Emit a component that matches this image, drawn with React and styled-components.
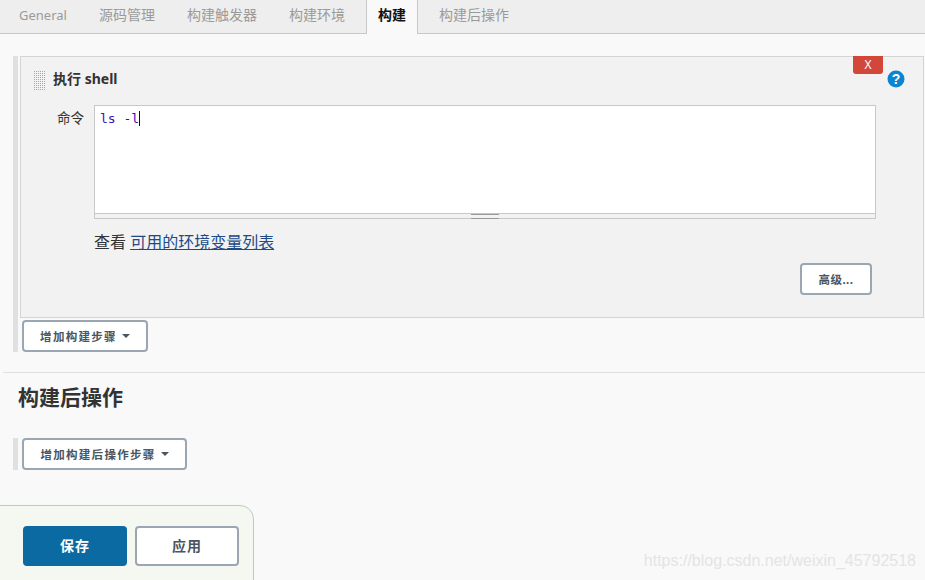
import React from "react";
import styled, { createGlobalStyle } from "styled-components";

const Global = createGlobalStyle`
  html, body { margin: 0; padding: 0; background: #f9f9f9; }
  body { width: 925px; height: 580px; overflow: hidden; font-family: "Noto Sans", "Noto Sans CJK SC", sans-serif; color: #333; }
  * { box-sizing: border-box; }
`;

const Page = styled.div`
  position: relative;
  width: 925px;
  height: 580px;
  overflow: hidden;
  display: flex;
  flex-direction: column;
`;

const TabBar = styled.div`
  display: flex;
  height: 34px;
  padding-left: 3px;
  background: #eeeeee;
  border-bottom: 1px solid #c8c8c8;
  flex: none;
`;

const Tab = styled.div`
  padding: 0 16px;
  height: 33px;
  line-height: 30px;
  font-size: ${(p) => p.$size || 14}px;
  color: #9a9a9a;
  white-space: nowrap;
`;

const ActiveTab = styled.div`
  margin: 0 5px 0 5px;
  padding: 0 11px;
  height: 34px;
  line-height: 30px;
  font-size: 14px;
  font-weight: 700;
  color: #111;
  background: #f9f9f9;
  border-left: 1px solid #c8c8c8;
  border-right: 1px solid #c8c8c8;
  white-space: nowrap;
`;

const Section = styled.div`
  display: flex;
  flex-direction: column;
  align-items: flex-start;
  margin: ${(p) => p.$margin};
  padding-left: 2px;
  border-left: 5px solid #e0e0e0;
`;

const Panel = styled.div`
  position: relative;
  width: 904px;
  height: 262px;
  padding: 0 0 0 12px;
  background: #f2f2f2;
  border: 1px solid #d4d4d4;
  margin-bottom: 2px;
`;

const PanelHead = styled.div`
  display: flex;
  align-items: center;
  height: 48px;
  padding: 0 0 4px 0;
  gap: 8px;
`;

const Grip = styled.div`
  width: 12px;
  height: 20px;
  margin-top: 3px;
  background: conic-gradient(#a8a8a8 25%, transparent 0) 0 0 / 2px 2px;
`;

const PanelTitle = styled.div`
  font-size: 14px;
  font-weight: 700;
  color: #333;
  line-height: 18px;
`;

const DeleteButton = styled.div`
  position: absolute;
  top: -1px;
  left: 832px;
  width: 30px;
  height: 18px;
  background: #d2473a;
  border-radius: 0 0 3px 3px;
  color: #fff;
  font-size: 12px;
  line-height: 17px;
  text-align: center;
`;

const HelpIcon = styled.svg`
  position: absolute;
  top: 13px;
  left: 866px;
`;

const FormRow = styled.div`
  display: flex;
  align-items: flex-start;
`;

const FieldLabel = styled.div`
  width: 51px;
  padding-top: 3px;
  text-align: right;
  font-size: 13.5px;
  line-height: 20px;
  color: #333;
`;

const Editor = styled.div`
  width: 782px;
  height: 114px;
  margin-left: 10px;
  background: #fff;
  border: 1px solid #c8c8c8;
  display: flex;
  flex-direction: column;
`;

const Code = styled.div`
  flex: 1;
  padding: 4px 5px;
  font-family: "DejaVu Sans Mono", "Noto Sans CJK SC", monospace;
  font-size: 13px;
  line-height: 17px;
  color: #3a10c0;
`;

const Caret = styled.span`
  display: inline-block;
  width: 1px;
  height: 15px;
  background: #111;
  vertical-align: -3px;
`;

const Grabber = styled.div`
  height: 5px;
  border-top: 1px solid #c8c8c8;
  background: #f2f2f2;
  display: flex;
  justify-content: center;
  flex: none;
  &::after {
    content: "";
    display: block;
    width: 28px;
    height: 3px;
    border-top: 1px solid #999;
    border-bottom: 1px solid #999;
  }
`;

const Hint = styled.div`
  margin: 12px 0 0 61px;
  font-size: 16px;
  line-height: 22px;
  color: #333;
`;

const HintLink = styled.a`
  color: #204a87;
  text-decoration: underline;
`;

const AdvancedRow = styled.div`
  display: flex;
  justify-content: flex-end;
  margin: 10px 51px 0 0;
`;

const Button = styled.div`
  display: flex;
  align-items: center;
  justify-content: center;
  gap: 5px;
  width: ${(p) => p.$w}px;
  height: ${(p) => p.$h}px;
  background: #fff;
  border: 2px solid #9aa7b3;
  border-radius: 4px;
  font-size: 11.5px;
  font-weight: 700;
  letter-spacing: ${(p) => p.$spacing || 0}px;
  color: #4a5560;
  white-space: nowrap;
`;

const StepButton = styled(Button)`
  margin-left: 2px;
`;

const Caretdown = styled.span`
  width: 0;
  height: 0;
  border-left: 4px solid transparent;
  border-right: 4px solid transparent;
  border-top: 4px solid #4a5560;
`;

const Divider = styled.div`
  height: 1px;
  margin: 20px 0 0 3px;
  background: #e0e0e0;
  flex: none;
`;

const Heading = styled.div`
  margin: 10px 0 0 18px;
  font-size: 21px;
  font-weight: 700;
  line-height: 28px;
  color: #333;
`;

const Footer = styled.div`
  position: absolute;
  left: -1px;
  bottom: -1px;
  width: 255px;
  height: 76px;
  display: flex;
  gap: 8px;
  padding: 20px 0 0 23px;
  background: #f4f8f1;
  border: 1px solid #b9cdbd;
  border-top-right-radius: 14px;
`;

const SaveButton = styled.div`
  width: 104px;
  height: 40px;
  background: #0b6aa2;
  border-radius: 4px;
  color: #fff;
  font-size: 14px;
  font-weight: 700;
  line-height: 40px;
  text-align: center;
  letter-spacing: 1px;
`;

const ApplyButton = styled(SaveButton)`
  background: #fff;
  border: 2px solid #9aa7b3;
  line-height: 36px;
  color: #4a5560;
`;

const Watermark = styled.div`
  position: absolute;
  right: 9px;
  bottom: 10px;
  font-family: "Liberation Sans", sans-serif;
  font-size: 16px;
  line-height: 18px;
  color: #e4e4e4;
`;

export default function App() {
  return (
    <Page>
      <Global />
      <TabBar>
        <Tab $size={13}>General</Tab>
        <Tab>源码管理</Tab>
        <Tab>构建触发器</Tab>
        <Tab>构建环境</Tab>
        <ActiveTab>构建</ActiveTab>
        <Tab>构建后操作</Tab>
      </TabBar>
      <Section $margin="22px 0 0 13px">
        <Panel>
          <PanelHead>
            <Grip />
            <PanelTitle>执行 shell</PanelTitle>
          </PanelHead>
          <DeleteButton>X</DeleteButton>
          <HelpIcon width="18" height="18" viewBox="0 0 18 18">
            <circle cx="9" cy="9" r="8.5" fill="#0b84d2" />
            <text x="9" y="14" textAnchor="middle" fontSize="14" fontWeight="700" fill="#fff" fontFamily="Liberation Sans">?</text>
          </HelpIcon>
          <FormRow>
            <FieldLabel>命令</FieldLabel>
            <Editor>
              <Code>ls -l<Caret /></Code>
              <Grabber />
            </Editor>
          </FormRow>
          <Hint>查看 <HintLink>可用的环境变量列表</HintLink></Hint>
          <AdvancedRow>
            <Button $w={72} $h={32} $spacing={0.5}>高级...</Button>
          </AdvancedRow>
        </Panel>
        <StepButton $w={126} $h={32} $spacing={1.3}>增加构建步骤<Caretdown /></StepButton>
      </Section>
      <Divider />
      <Heading>构建后操作</Heading>
      <Section $margin="27px 0 0 13px">
        <StepButton $w={165} $h={32} $spacing={1.3}>增加构建后操作步骤<Caretdown /></StepButton>
      </Section>
      <Footer>
        <SaveButton>保存</SaveButton>
        <ApplyButton>应用</ApplyButton>
      </Footer>
      <Watermark>https://blog.csdn.net/weixin_45792518</Watermark>
    </Page>
  );
}
